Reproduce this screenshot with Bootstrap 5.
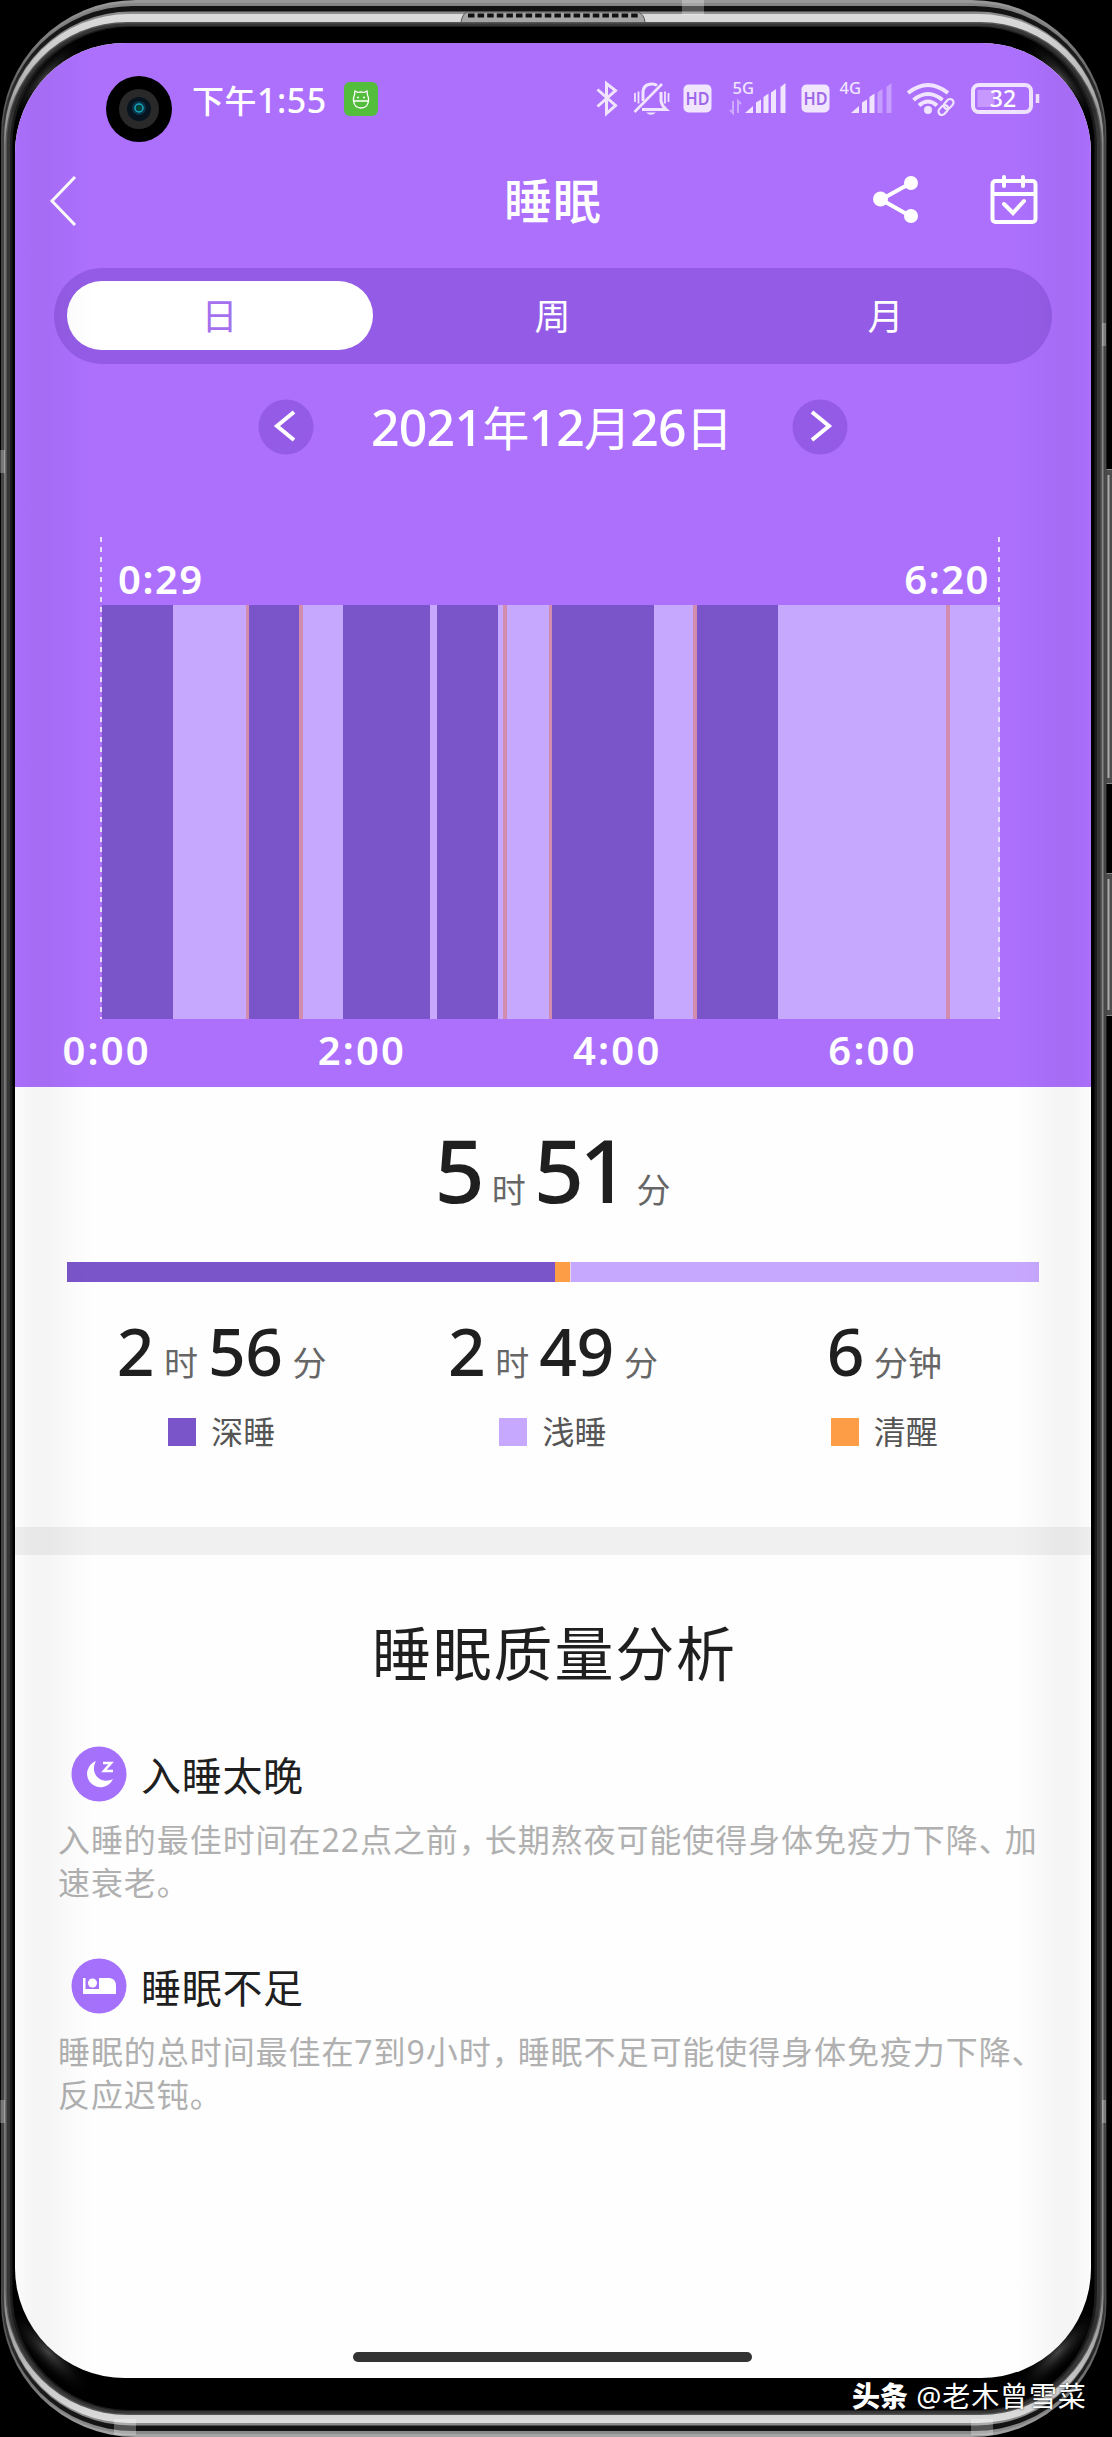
<!DOCTYPE html>
<html lang="zh-CN">
<head>
<meta charset="utf-8">
<meta name="viewport" content="width=device-width, initial-scale=1">
<title>睡眠</title>
<link rel="stylesheet" href="https://cdn.jsdelivr.net/npm/bootstrap@5.3.0/dist/css/bootstrap.min.css">
<style>
:root{--violet:#ac70fd;--violet-deep:#945ce6;--deep:#7a55ca;--light:#c7a8ff;--awake:#fd9d46}
body{margin:0;background:#000;font-family:"Noto Sans","Noto Sans CJK SC",sans-serif;color:#1f1f1f}
.phone{width:1112px;height:2437px;padding:43px 21px 0 15px;overflow:hidden}
.shell{inset:0}
.display{width:1076px;height:2335px;border-radius:110px;overflow:hidden;background:#fefefe}
.edge{top:0;bottom:0;width:80px;pointer-events:none}
.edge-l{left:0;background:linear-gradient(90deg,rgba(0,0,0,.008),rgba(0,0,0,.036) 22%,rgba(0,0,0,.034) 42%,rgba(0,0,0,.01) 75%,transparent)}
.edge-r{right:0;background:linear-gradient(270deg,rgba(0,0,0,.008),rgba(0,0,0,.036) 22%,rgba(0,0,0,.034) 42%,rgba(0,0,0,.01) 75%,transparent)}
.hero{background:var(--violet);color:#fff;height:1044px}
.statusbar{height:112px;padding:0 50px 0 91px}
.lens{width:66px;height:66px;margin-top:19px}
.clock{font-size:34px;font-weight:500;line-height:1;margin-left:20px;letter-spacing:.5px;padding-top:2px}
.clock span{font-size:32px}
.appicon{margin-left:17px}
.titlebar{height:92px;padding:0 53px 0 34px}
.titlebar h1{font-size:48px;font-weight:500;line-height:1;margin:0 0 0 427px;letter-spacing:1px}
.cal-icon{margin-left:69px}
.tabs{margin:21px 39px 0;height:96px;border-radius:48px;background:var(--violet-deep);padding:13px}
.tabs .nav-link{width:306px;height:69px;border-radius:35px;color:#fff;font-size:36px;line-height:72px;padding:0 1px 0 0;text-align:center}
.tabs .nav-link.active{background:#fff;color:#a470ee}
.dater{height:124px;gap:54px;padding:2px 1px 0 0}
.dater .day{font-size:50px;font-weight:500;line-height:1;width:370px;white-space:nowrap;letter-spacing:-.8px;padding-right:2px}
.dater .day span{font-size:47px;font-weight:400}
.plot{width:900px;margin:49px 0 0 86px;height:482px}
.plot::before,.plot::after{content:"";position:absolute;top:0;bottom:0;width:2px;background:repeating-linear-gradient(180deg,#e6dcf8 0 5px,transparent 5px 10px)}
.plot::before{left:-1px}.plot::after{right:1px}
.ends{height:68px;padding:22px 11px 0 17px;font-size:40px;font-weight:600;line-height:40px;letter-spacing:1.5px}
.strips{height:414px;width:898px;margin-left:1px}
.s-d{background:var(--deep)}.s-l{background:var(--light)}.s-a{background:#d28cae}
.axis{height:68px;font-size:40px;font-weight:600;line-height:62px;padding-left:32px;margin-left:-68px}
.axis span{width:255.3px;text-align:center;flex:none;letter-spacing:2.2px}
.total{height:175px;padding-top:38px;line-height:89px;padding-right:1px}
.big{font-size:88px;font-weight:500;letter-spacing:-5px}
.mid{font-size:66px;font-weight:500;letter-spacing:-.5px}
.unit{font-size:34px;color:#666}
.total .unit{margin:0 8px 0 12px}
.figure-line .unit{margin:0 10px}
.splitbar{height:20px;margin:0 52px}
.splitbar .s-a{background:var(--awake);border-right:1px solid #e9d3ea}
.stats{height:245px;padding:28px 41px 0 41px}
.figure-line{line-height:80px;height:80px;white-space:nowrap}
.key{font-size:32px;line-height:40px;color:#555;margin-top:22px;gap:15px}
.key i{width:28px;height:28px}
.divider{height:28px;background:#f0f0f1}
.report h2{font-size:59px;font-weight:400;line-height:70px;letter-spacing:1.8px;margin:63px 0 0 357px}
.tip{padding:0 0 0 43px}
.tip h3{font-size:40px;font-weight:400;line-height:56px;margin:0;letter-spacing:.7px;padding-top:3px}
.tip-head{height:56px;gap:14px;padding-left:13px}
.tip p{font-size:32px;line-height:43px;color:#b0b0b0;letter-spacing:.93px;margin:16px 0 0;white-space:nowrap}
.tip p b{font-weight:400;letter-spacing:-6px}
.tip-late{margin-top:58px}.tip-short{margin-top:54px}
.homebar{left:338px;top:2309px;width:399px;height:10px;border-radius:5px;background:#333}
.signature{left:852px;top:2376px;line-height:38px;font-size:28px;color:#fff;white-space:nowrap;text-shadow:0 0 2px #000;letter-spacing:.9px}
.signature b{font-weight:900;font-family:"Noto Sans CJK SC",sans-serif;letter-spacing:0}
</style>
</head>
<body>
<main class="phone position-relative">
<svg class="shell position-absolute" width="1112" height="2437" viewBox="0 0 1112 2437">
<defs>
<linearGradient id="rim" x1="0" y1="0" x2="0" y2="2437" gradientUnits="userSpaceOnUse"><stop offset="0" stop-color="#999"/><stop offset=".02" stop-color="#777"/><stop offset=".06" stop-color="#3c3c3c"/><stop offset=".94" stop-color="#3c3c3c"/><stop offset=".98" stop-color="#777"/><stop offset="1" stop-color="#a5a5a5"/></linearGradient>
<linearGradient id="shine" x1="0" y1="0" x2="0" y2="2437" gradientUnits="userSpaceOnUse"><stop offset="0" stop-color="#e2e2e2"/><stop offset=".02" stop-color="#ccc"/><stop offset=".06" stop-color="#858585"/><stop offset=".94" stop-color="#858585"/><stop offset=".98" stop-color="#ccc"/><stop offset="1" stop-color="#e2e2e2"/></linearGradient>
<linearGradient id="dark" x1="0" y1="0" x2="0" y2="2437" gradientUnits="userSpaceOnUse"><stop offset="0" stop-color="#111"/><stop offset=".02" stop-color="#1a1a1a"/><stop offset=".06" stop-color="#444"/><stop offset=".94" stop-color="#444"/><stop offset=".98" stop-color="#1a1a1a"/><stop offset="1" stop-color="#111"/></linearGradient>
<radialGradient id="glow"><stop offset="0" stop-color="#444"/><stop offset="1" stop-color="#000" stop-opacity="0"/></radialGradient>
</defs>
<g fill="#4d4d4d" stroke="#888" stroke-width="1"><rect x="1103" y="469.500" width="14" height="314" rx="4"/><rect x="1103" y="873.500" width="14" height="142" rx="4"/></g>
<path d="M1108.500 475v303M1108.500 879v131" stroke="#aaa" stroke-width="2"/>
<rect x="1" width="1105.500" height="2437" rx="135" fill="url(#rim)"/>
<rect x="1.700" y="3" width="1104" height="2431" rx="133" fill="#777" fill-opacity=".55"/>
<rect x="2" y="6" width="1103.500" height="2425" rx="131" fill="url(#dark)"/>
<rect x="4" y="11.500" width="1099.500" height="2414" rx="127" fill="url(#shine)" opacity=".6"/>
<rect x="4.300" y="14" width="1099" height="2409" rx="125" fill="url(#shine)"/>
<rect x="5.500" y="22" width="1096.500" height="2393" rx="122" fill="#555"/>
<rect x="7" y="23.500" width="1093.500" height="2390" rx="120" fill="#363636"/>
<rect x="10" y="26" width="1087" height="2385" rx="118" fill="#1c1c1c"/>
<rect x="12.500" y="27" width="1082" height="2383" rx="117" fill="#000"/>
<g fill="url(#glow)"><ellipse rx="55" ry="15" transform="translate(45 78) rotate(-48)"/><ellipse rx="55" ry="15" transform="translate(1062 78) rotate(48)"/><ellipse rx="58" ry="17" transform="translate(48 2352) rotate(45)"/><ellipse rx="58" ry="17" transform="translate(1058 2352) rotate(-45)"/></g>
<path d="M461 22q2-9 6-10H638q6 2 7 10" fill="#a5a5a5" stroke="#555"/>
<path d="M468 15.500H640" stroke="#111" stroke-width="4" stroke-dasharray="6.500 3.100"/>
<g fill="#fff" fill-opacity=".28"><path d="M682 0h22v15h-22zM114 2419h22v16h-22zM971 2419h22v16h-22zM0 450h5v23H0zM1102 323h4v23h-4zM0 2100h5v23H0zM1102 2100h4v23h-4z"/></g>
</svg>
<div class="display position-relative">
<header class="hero">
<div class="statusbar d-flex align-items-center">
<svg class="lens" viewBox="0 0 66 66"><circle cx="33" cy="33" r="33"/><circle cx="33" cy="33" r="20" fill="#292929"/><circle cx="33" cy="33" r="12" fill="#07141f"/><circle cx="33" cy="32" r="7" fill="#0a3448"/><circle cx="33" cy="32" r="4" fill="none" stroke="#18a8bd" stroke-width="1.500"/><path d="M33 29v6m-3-3h6" stroke="#052" stroke-width="1"/></svg>
<div class="clock"><span>下午</span>1:55</div>
<svg class="appicon" width="34" height="34" viewBox="0 0 34 34"><rect width="34" height="34" rx="6" fill="#55bd3c"/><path d="M10.500 13l.5-4 3 1.500q3-1 6 0L23 9l.5 4q1.500 3 1 6-1 7-7.500 7t-7.500-7q-.5-3 1-6zM10 19h14" fill="none" stroke="#fff" stroke-width="1.300"/><circle cx="14" cy="15.500" r="1" fill="#fff"/><circle cx="20" cy="15.500" r="1" fill="#fff"/></svg>
<svg class="ms-auto" width="445" height="60" viewBox="0 -10 445 60" fill="none" stroke="#f0e4ff" font-family="Noto Sans,sans-serif">
<path d="M1.500 10.500l18 16-9 8v-30l9 7-18 16" stroke-width="3"/>
<path d="M47 22V14q0-9 9-9 3 0 5 1.500M65 13v9q1 5 5 8.500H46" stroke-width="3"/><path d="M38.500 33L66 5" stroke-width="2.600"/><path d="M50 33.500h10q-5 4.500-10 0z" fill="#f0e4ff" stroke="none"/><path d="M39 14v9M42.500 12.500v12M69 12.500v12M72.500 14v9" stroke-width="1.800"/>
<g stroke="none" fill="#f0e4ff"><rect x="87.500" y="5.500" width="28" height="28" rx="5"/><rect x="205.500" y="5.500" width="28" height="28" rx="5"/>
<g fill="#9e68e8" font-size="18" font-weight="600" text-anchor="middle"><text x="101.500" y="26" textLength="24" lengthAdjust="spacingAndGlyphs">HD</text><text x="219.500" y="26" textLength="24" lengthAdjust="spacingAndGlyphs">HD</text></g>
<text x="136.500" y="15" font-size="16.500" font-weight="500">5G</text><text x="243.500" y="15" font-size="16.500" font-weight="500">4G</text>
<path d="M149 34l8-7v7zM160 23.500l5-3V34h-5zM167.500 18l5-3.500V34h-5zM175 13.500l5-3.500V34h-5zM184.500 8l5-4v30h-5zM255 34l8-7v7zM266 23.500l5-3V34h-5zM273.500 18l5-3.500V34h-5z"/><path d="M281.500 13.500l5-3.500V34h-5zM290.500 8l5-4v30h-5z" opacity=".4"/>
<circle cx="332" cy="31" r="4"/></g>
<path d="M137 22v12l-3-3M142 34V22l3 3" stroke-width="2" opacity=".5"/>
<path d="M312 14q20-16 40 0M317.500 21q14.500-12 29 0M323 26.500q9-8 18 0" stroke-width="4"/>
<g stroke-width="2.200" transform="rotate(-48 350 28)"><rect x="340.500" y="24.500" width="11" height="7" rx="3.500"/><rect x="348.500" y="24.500" width="11" height="7" rx="3.500"/></g>
<rect x="377" y="6" width="58" height="27" rx="6" stroke-width="4"/><rect x="381.500" y="11" width="17" height="17" fill="#c799ff" stroke="none"/><path d="M441.500 15v9" stroke-width="3.500"/>
<text x="407" y="27.500" font-size="23" font-weight="500" fill="#fff" stroke="none" text-anchor="middle">32</text>
</svg>
</div>
<div class="titlebar d-flex align-items-center">
<svg width="28" height="52" viewBox="0 0 28 52" fill="none" stroke="#fff" stroke-width="3"><path d="M26 2L3 26l23 24"/></svg>
<h1>睡眠</h1>
<svg class="ms-auto" width="48" height="50" viewBox="0 0 48 50" fill="#fff"><path d="M38 7L8 23.500l30 17" fill="none" stroke="#fff" stroke-width="4"/><circle cx="7.500" cy="23" r="7.500"/><circle cx="38" cy="7" r="7"/><circle cx="38" cy="40" r="7"/></svg>
<svg class="cal-icon" width="48" height="52" viewBox="0 0 48 52" fill="none" stroke="#fff" stroke-width="4"><rect x="2.500" y="6" width="43" height="41" rx="3"/><path d="M2 19h44"/><path d="M14 2v9M33 2v9M14 29l9 9 11-12" stroke-linecap="round"/></svg>
</div>
<nav class="tabs nav justify-content-between flex-nowrap">
<a class="nav-link active">日</a><a class="nav-link">周</a><a class="nav-link">月</a>
</nav>
<div class="dater d-flex align-items-center justify-content-center">
<svg width="56" height="56" viewBox="0 0 56 56"><circle cx="28" cy="28" r="27.500" fill="#945ce6"/><path d="M36 13L19 27l17 14" fill="none" stroke="#fff" stroke-width="4"/></svg>
<div class="day text-center">2021<span>年</span>12<span>月</span>26<span>日</span></div>
<svg width="56" height="56" viewBox="0 0 56 56"><circle cx="28" cy="28" r="27.500" fill="#945ce6"/><path d="M20 13l17 14-17 14" fill="none" stroke="#fff" stroke-width="4"/></svg>
</div>
<div class="plot position-relative">
<div class="ends d-flex justify-content-between"><span>0:29</span><span>6:20</span></div>
<div class="strips d-flex">
<i class="s-d" style="width:70.500px"></i><i class="s-l" style="width:73.500px"></i><i class="s-a" style="width:3px"></i><i class="s-d" style="width:50px"></i><i class="s-a" style="width:4px"></i><i class="s-l" style="width:40px"></i><i class="s-d" style="width:87px"></i><i class="s-l" style="width:7px"></i><i class="s-d" style="width:61px"></i><i class="s-l" style="width:5px"></i><i class="s-a" style="width:4px"></i><i class="s-l" style="width:42px"></i><i class="s-a" style="width:3px"></i><i class="s-d" style="width:101.500px"></i><i class="s-l" style="width:39px"></i><i class="s-a" style="width:4px"></i><i class="s-d" style="width:81.500px"></i><i class="s-l" style="width:167.500px"></i><i class="s-a" style="width:4px"></i><i class="s-l flex-fill"></i>
</div>
</div>
<div class="axis d-flex"><span>0:00</span><span>2:00</span><span>4:00</span><span>6:00</span></div>
</header>
<section>
<div class="total text-center"><span class="big">5</span><span class="unit">时</span><span class="big">51</span><span class="unit me-0">分</span></div>
<div class="splitbar d-flex"><i class="s-d" style="width:50.200%"></i><i class="s-a" style="width:1.700%"></i><i class="s-l flex-fill"></i></div>
<div class="stats row g-0 text-center">
<div class="col-4"><div class="figure-line"><span class="mid">2</span><span class="unit">时</span><span class="mid">56</span><span class="unit me-0">分</span></div><div class="key d-flex align-items-center justify-content-center"><i class="s-d"></i>深睡</div></div>
<div class="col-4"><div class="figure-line"><span class="mid">2</span><span class="unit">时</span><span class="mid">49</span><span class="unit me-0">分</span></div><div class="key d-flex align-items-center justify-content-center"><i class="s-l"></i>浅睡</div></div>
<div class="col-4"><div class="figure-line"><span class="mid">6</span><span class="unit me-0">分钟</span></div><div class="key d-flex align-items-center justify-content-center"><i style="background:var(--awake)"></i>清醒</div></div>
</div>
</section>
<div class="divider"></div>
<section class="report">
<h2>睡眠质量分析</h2>
<article class="tip tip-late">
<div class="tip-head d-flex align-items-center"><svg width="56" height="56" viewBox="0 0 56 56"><circle cx="28" cy="28" r="27.500" fill="#a571fc"/><path d="M25 15a13.500 13.500 0 1 0 17 18c-12 6-24-5-17-18z" fill="#fff"/><path d="M32 17h8l-7 8h9" fill="none" stroke="#fff" stroke-width="2.600"/></svg><h3>入睡太晚</h3></div>
<p>入睡的最佳时间在22点之前<b>，</b>长期熬夜可能使得身体免疫力下降<b>、</b>加<br>速衰老。</p>
</article>
<article class="tip tip-short">
<div class="tip-head d-flex align-items-center"><svg width="56" height="56" viewBox="0 0 56 56"><circle cx="28" cy="28" r="27.500" fill="#a571fc"/><path d="M12 20h2.500v11H28V20h11q6 1 6 8v8H12z" fill="#fff"/><circle cx="21.500" cy="25" r="4.500" fill="#fff"/></svg><h3>睡眠不足</h3></div>
<p>睡眠的总时间最佳在7到9小时<b>，</b>睡眠不足可能使得身体免疫力下降<b>、</b><br>反应迟钝。</p>
</article>
</section>
<div class="edge edge-l position-absolute"></div><div class="edge edge-r position-absolute"></div>
<div class="homebar position-absolute"></div>
</div>
<div class="signature position-absolute"><b>头条</b> @老木曾雪菜</div>
</main>
<script src="https://cdn.jsdelivr.net/npm/bootstrap@5.3.0/dist/js/bootstrap.bundle.min.js"></script>
</body>
</html>
